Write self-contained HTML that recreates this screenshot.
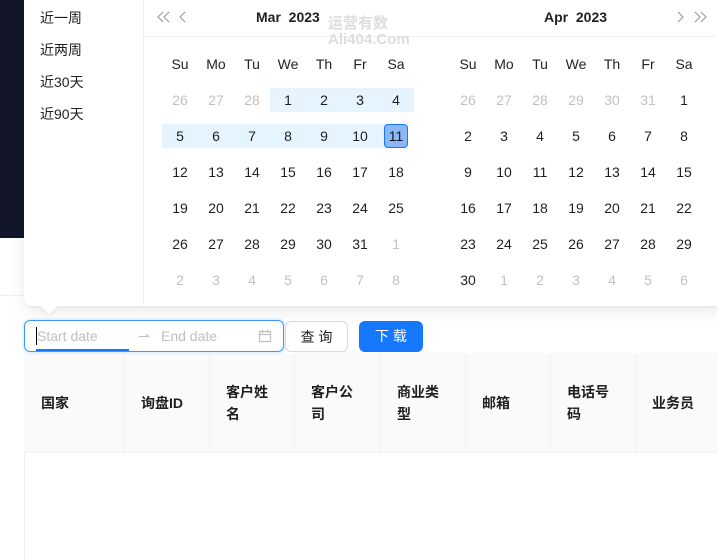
<!DOCTYPE html>
<html><head><meta charset="utf-8"><style>
*{box-sizing:border-box;margin:0;padding:0}
body{width:717px;height:560px;overflow:hidden;background:#fff;font-family:"Liberation Sans","Noto Sans CJK SC",sans-serif;position:relative;color:rgba(0,0,0,.88);font-size:14px}
.dark{position:absolute;left:0;top:0;width:30px;height:238px;background:#131628}
.hl{position:absolute;left:0;top:295px;width:30px;height:1px;background:#eee}
.pop{position:absolute;left:24px;top:0;width:700px;height:306px;background:#fff;border-radius:0 0 8px 8px;box-shadow:0 6px 16px rgba(0,0,0,.08),0 3px 6px -4px rgba(0,0,0,.12)}
.arrow{position:absolute;left:43px;top:300px;width:12px;height:12px;background:#fff;transform:rotate(45deg);box-shadow:2px 2px 3px rgba(0,0,0,.05)}
.presets{position:absolute;left:0;top:0;width:120px;height:306px;border-right:1px solid #f0f0f0}
.presets div{position:absolute;left:16px;font-size:14px}
.hdr{position:absolute;left:120px;top:0;width:580px;height:37px;border-bottom:1px solid #f0f0f0}
.t{position:absolute;font-weight:bold;font-size:14px;top:9px}
.nav{position:absolute;top:11px}
.c{position:absolute;width:36px;text-align:center;font-size:14px;line-height:24px}
.g{color:rgba(0,0,0,.25)}
.rg{position:absolute;background:#e6f4ff;height:24px}
.sel{position:absolute;left:360px;top:124px;width:24px;height:24px;background:#8ab8f7;border:1px solid #1677ff;border-radius:4px}
.inp{position:absolute;left:24px;top:320px;width:260px;height:32px;border:1px solid #4096ff;border-radius:6px;box-shadow:0 0 0 2px rgba(5,145,255,.1)}
.btn{position:absolute;top:321px;height:31px;border-radius:6px;font-size:14px;text-align:center;line-height:30px}
.table{position:absolute;left:24px;top:353px;width:700px;height:100px;background:#fafafa;border-bottom:1px solid #f0f0f0}
.th{position:absolute;font-weight:bold;font-size:14px;line-height:22px}
.vl{position:absolute;top:0;width:1px;height:100px;background:#f0f0f0}
</style></head><body>
<div class="dark"></div><div class="hl"></div>
<div class="table">
<div class="vl" style="left:100px"></div><div class="vl" style="left:185px"></div><div class="vl" style="left:270px"></div><div class="vl" style="left:356px"></div><div class="vl" style="left:441px"></div><div class="vl" style="left:526px"></div><div class="vl" style="left:611px"></div>
<div class="th" style="left:17px;top:39px">国家</div>
<div class="th" style="left:117px;top:39px">询盘ID</div>
<div class="th" style="left:202px;top:28px">客户姓<br>名</div>
<div class="th" style="left:287px;top:28px">客户公<br>司</div>
<div class="th" style="left:373px;top:28px">商业类<br>型</div>
<div class="th" style="left:458px;top:39px">邮箱</div>
<div class="th" style="left:543px;top:28px">电话号<br>码</div>
<div class="th" style="left:628px;top:39px">业务员</div>
</div>
<div style="position:absolute;left:24px;top:453px;width:1px;height:107px;background:#f0f0f0"></div>
<div class="inp">
<div style="position:absolute;left:11px;top:6px;width:1px;height:18px;background:#000"></div>
<div style="position:absolute;left:12px;top:6px;color:#bfbfbf;line-height:18px">Start date</div>
<div style="position:absolute;left:11px;top:28px;width:93px;height:2px;background:#1677ff"></div>
<div style="position:absolute;left:113px;top:6px;color:#bfbfbf;line-height:18px">⇀</div>
<div style="position:absolute;left:136px;top:6px;color:#bfbfbf;line-height:18px">End date</div>
<svg style="position:absolute;left:233px;top:8px" width="14" height="14" viewBox="0 0 14 14" fill="none" stroke="#bfbfbf" stroke-width="1.2"><rect x="1.5" y="2.5" width="11" height="10"/><path d="M1.5 5.5h11M4.5 1v3M9.5 1v3"/></svg>
</div>
<div class="btn" style="left:285px;width:63px;border:1px solid #d9d9d9">查 询</div>
<div class="btn" style="left:359px;width:64px;background:#1677ff;color:#fff;line-height:31px">下 载</div>
<div class="pop">
<div class="presets"><div style="top:8px">近一周</div><div style="top:40px">近两周</div><div style="top:72px">近30天</div><div style="top:104px">近90天</div></div>
<div class="hdr">
<svg class="nav" style="left:13px" width="14" height="12" viewBox="0 0 14 12" fill="none" stroke="#999" stroke-width="1.1"><path d="M6 1L1 6l5 5M12 1L7 6l5 5"/></svg>
<svg class="nav" style="left:35px" width="7" height="12" viewBox="0 0 7 12" fill="none" stroke="#999" stroke-width="1.1"><path d="M6 1L1 6l5 5"/></svg>
<div class="t" style="left:112px">Mar&nbsp; 2023</div>
<div style="position:absolute;left:184px;top:16px;color:#ddd;font-size:15px;font-weight:bold;line-height:16px">运营有数<br>Ali404.Com</div>
<div class="t" style="left:400px">Apr&nbsp; 2023</div>
<svg class="nav" style="left:533px" width="7" height="12" viewBox="0 0 7 12" fill="none" stroke="#999" stroke-width="1.1"><path d="M1 1l5 5-5 5"/></svg>
<svg class="nav" style="left:549px" width="14" height="12" viewBox="0 0 14 12" fill="none" stroke="#999" stroke-width="1.1"><path d="M2 1l5 5-5 5M8 1l5 5-5 5"/></svg>
</div>
<div class="rg" style="left:246px;top:88px;width:144px"></div>
<div class="rg" style="left:138px;top:124px;width:228px"></div>
<div class="sel"></div>
<div id="cal"></div>
</div>
<div class="arrow"></div>
<script>
var h='',d=['Su','Mo','Tu','We','Th','Fr','Sa'];
function cal(x0,cells){for(var i=0;i<7;i++)h+='<div class="c" style="left:'+(x0+36*i)+'px;top:52px">'+d[i]+'</div>';
for(var k=0;k<42;k++){var c=cells[k];h+='<div class="c'+(c[1]?' g':'')+'" style="left:'+(x0+36*(k%7))+'px;top:'+(88+36*Math.floor(k/7))+'px">'+c[0]+'</div>';}}
var m=[];for(var i=26;i<=28;i++)m.push([i,1]);for(i=1;i<=31;i++)m.push([i,0]);for(i=1;i<=8;i++)m.push([i,1]);
var a=[];for(i=26;i<=31;i++)a.push([i,1]);for(i=1;i<=30;i++)a.push([i,0]);for(i=1;i<=6;i++)a.push([i,1]);
cal(138,m);cal(426,a);
document.getElementById('cal').innerHTML=h;
</script>
</body></html>
